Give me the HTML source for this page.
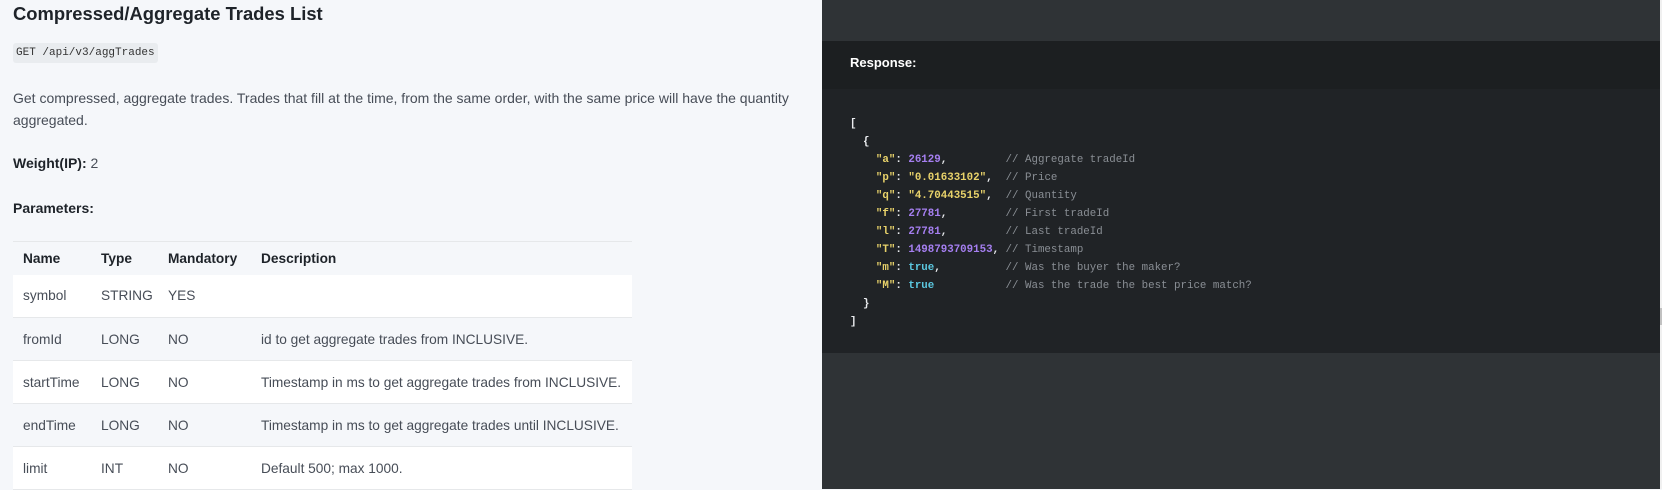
<!DOCTYPE html>
<html><head><meta charset="utf-8"><style>
*{margin:0;padding:0;box-sizing:border-box}
html,body{width:1662px;height:489px;overflow:hidden;background:#f5f7fa;font-family:"Liberation Sans",sans-serif}
.left{position:absolute;left:0;top:0;width:822px;height:489px;background:#f5f7fa;color:#474d57}
.t{position:absolute;left:13px;top:3px;font-size:18.4px;font-weight:bold;color:#1e2329}
.badge{position:absolute;left:13px;top:43px;width:145px;height:20px;background:#e9ecef;border-radius:3px;font-family:"Liberation Mono",monospace;font-size:11px;line-height:20px;padding-left:3px;color:#333}
.p{position:absolute;left:13px;font-size:14px;color:#474d57}
table{position:absolute;left:13px;top:241px;width:619px;border-collapse:collapse;font-size:13.7px;color:#474d57;border-top:1px solid #e6e8ea}
th{text-align:left;font-weight:bold;color:#1e2329;height:33px;padding:0}
td{height:43px;padding:0;border-bottom:1px solid #e6e8ea}
tr.w td{background:#fff}
tr.g td{background:#f5f7fa}
th:first-child,td:first-child{padding-left:10px}
.right{position:absolute;left:822px;top:0;width:838px;height:489px;background:#2f3336}
.rh{position:absolute;left:0;top:41px;width:838px;height:48px;background:#1c1f21;color:#fff;font-weight:bold;font-size:13px;padding:14px 0 0 28px}
.code{position:absolute;left:0;top:89px;width:838px;height:264px;background:#202326}
pre{position:absolute;left:28px;top:26px;font-family:"Liberation Mono",monospace;font-size:10.8px;line-height:18px;color:#eaecef;font-weight:bold}
.k{color:#e8d26a}.n{color:#a57ff0}.b{color:#5bc8e0}.c{color:#8a8f95;font-weight:normal}
.sb{position:absolute;left:1660px;top:0;width:2px;height:489px;background:#f0f0f0}
.st{position:absolute;left:1660px;top:308px;width:2px;height:17px;background:#c1c1c1}
</style></head><body>
<div class="left">
<div class="t">Compressed/Aggregate Trades List</div>
<div class="badge">GET /api/v3/aggTrades</div>
<div class="p" style="top:87px;line-height:22px;width:790px">Get compressed, aggregate trades. Trades that fill at the time, from the same order, with the same price will have the quantity aggregated.</div>
<div class="p" style="top:155px"><b style="color:#1e2329">Weight(IP):</b> 2</div>
<div class="p" style="top:200px"><b style="color:#1e2329">Parameters:</b></div>
<table>
<tr><th style="width:88px">Name</th><th style="width:67px">Type</th><th style="width:93px">Mandatory</th><th>Description</th></tr>
<tr class="w"><td>symbol</td><td>STRING</td><td>YES</td><td></td></tr>
<tr class="g"><td>fromId</td><td>LONG</td><td>NO</td><td>id to get aggregate trades from INCLUSIVE.</td></tr>
<tr class="w"><td>startTime</td><td>LONG</td><td>NO</td><td>Timestamp in ms to get aggregate trades from INCLUSIVE.</td></tr>
<tr class="g"><td>endTime</td><td>LONG</td><td>NO</td><td>Timestamp in ms to get aggregate trades until INCLUSIVE.</td></tr>
<tr class="w"><td>limit</td><td>INT</td><td>NO</td><td>Default 500; max 1000.</td></tr>
</table>
</div>
<div class="right">
<div class="rh">Response:</div>
<div class="code"><pre>[
  {
    <span class="k">"a"</span>: <span class="n">26129</span>,         <span class="c">// Aggregate tradeId</span>
    <span class="k">"p"</span>: <span class="k">"0.01633102"</span>,  <span class="c">// Price</span>
    <span class="k">"q"</span>: <span class="k">"4.70443515"</span>,  <span class="c">// Quantity</span>
    <span class="k">"f"</span>: <span class="n">27781</span>,         <span class="c">// First tradeId</span>
    <span class="k">"l"</span>: <span class="n">27781</span>,         <span class="c">// Last tradeId</span>
    <span class="k">"T"</span>: <span class="n">1498793709153</span>, <span class="c">// Timestamp</span>
    <span class="k">"m"</span>: <span class="b">true</span>,          <span class="c">// Was the buyer the maker?</span>
    <span class="k">"M"</span>: <span class="b">true</span>           <span class="c">// Was the trade the best price match?</span>
  }
]</pre></div>
</div>
<div class="sb"></div><div class="st"></div>
</body></html>
